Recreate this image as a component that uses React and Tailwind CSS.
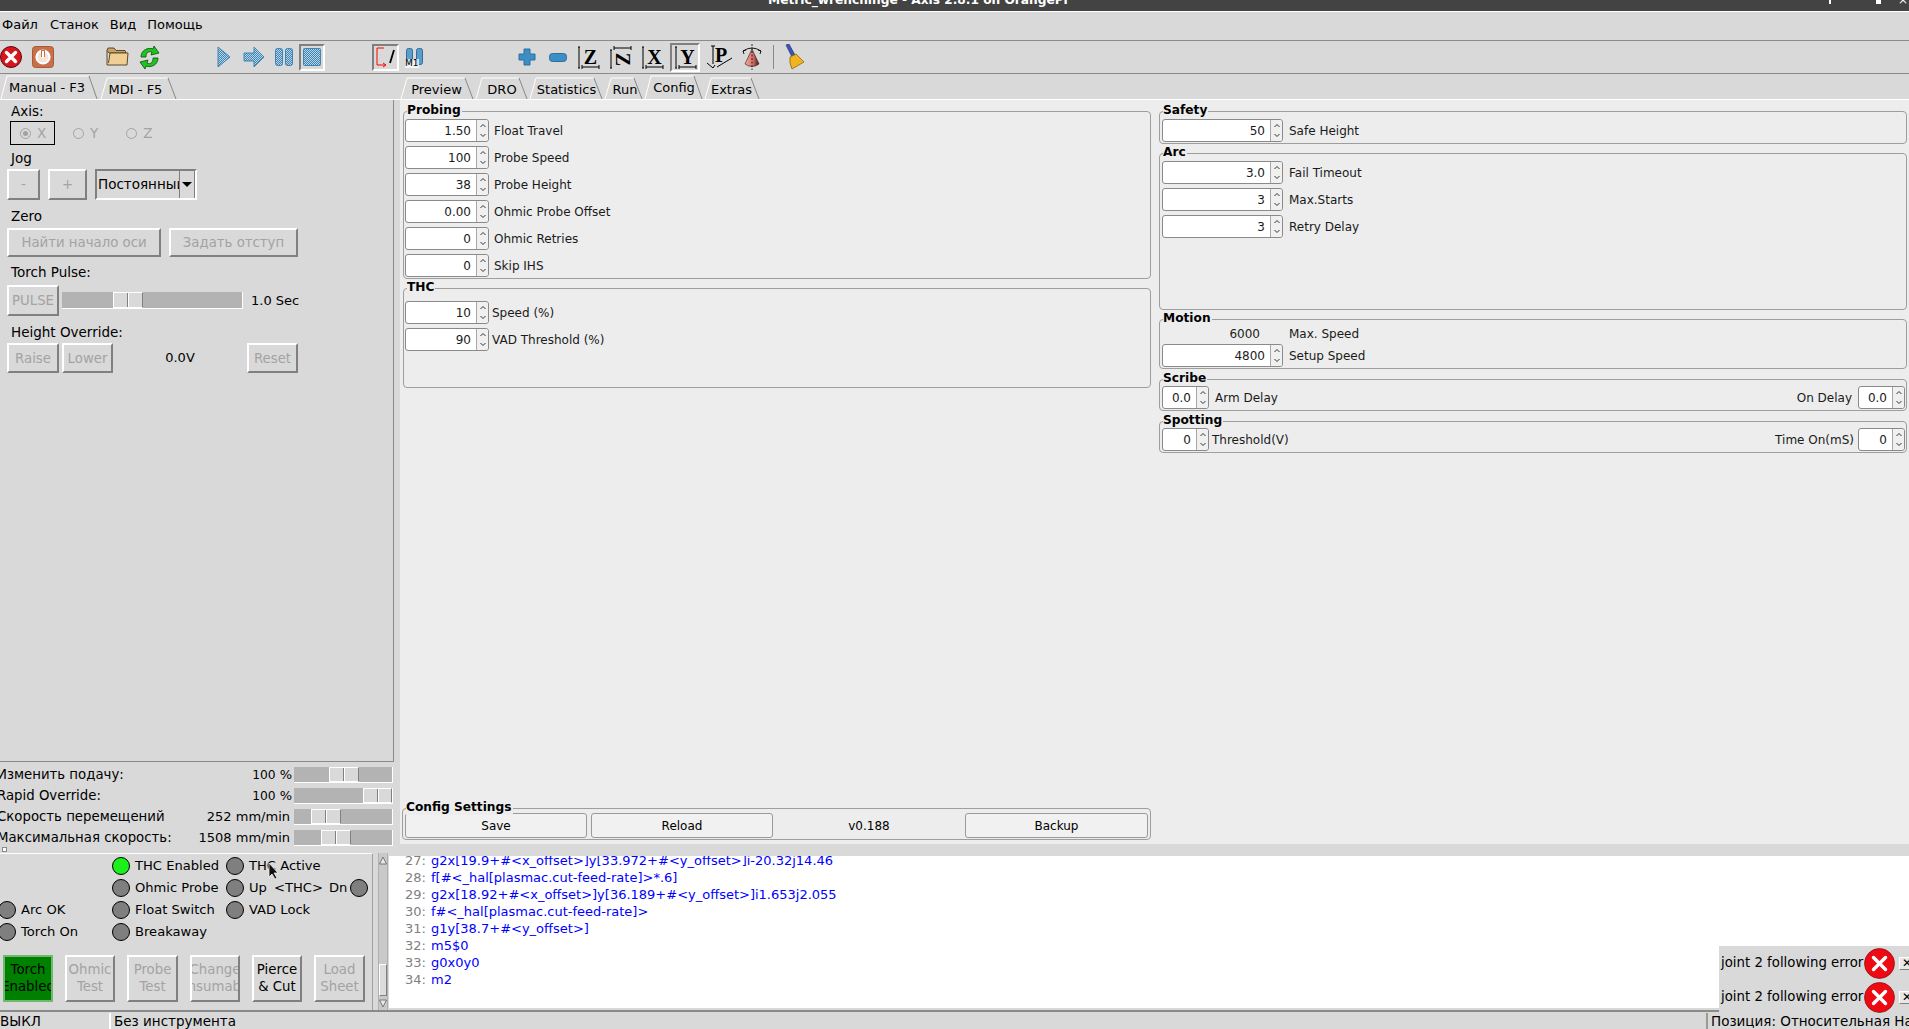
import React from "react";

const ui = "font-['DejaVu_Sans',sans-serif]";

function Hatch({ id }) {
  return (
    <defs>
      <pattern id={id} width="2" height="2" patternUnits="userSpaceOnUse">
        <rect width="2" height="2" fill="#b8d4e6" />
        <rect width="1" height="1" fill="#3f85b2" />
        <rect x="1" y="1" width="1" height="1" fill="#3f85b2" />
      </pattern>
    </defs>
  );
}

const IconStop = () => (
  <svg width="22" height="22" viewBox="0 0 22 22" className="shrink-0">
    <circle cx="11" cy="11" r="10.5" fill="#d8141c" stroke="#5a0a0e" />
    <path d="M6.5 6.5 15.5 15.5M15.5 6.5 6.5 15.5" stroke="#fff" strokeWidth="3.4" strokeLinecap="round" />
  </svg>
);
const IconPower = () => (
  <svg width="22" height="22" viewBox="0 0 22 22" className="ml-[10px] shrink-0">
    <rect x="0.5" y="0.5" width="21" height="21" rx="3" fill="#c8704a" stroke="#a85a38" />
    <circle cx="11" cy="11" r="6.5" fill="#f2e4d8" stroke="#fff" strokeWidth="2.2" />
    <path d="M11 4v7" stroke="#c8704a" strokeWidth="4" />
    <path d="M11 5v7" stroke="#fff" strokeWidth="2" />
  </svg>
);
const IconFolder = () => (
  <svg width="23" height="20" viewBox="0 0 23 20" className="ml-[52px] shrink-0">
    <path d="M1 3.5 2 1h6l2 2.5h9l1 2.5H3z" fill="#c9a368" stroke="#5a4a2a" />
    <path d="M1 3.5V18h20l1-12H4L2.5 16" fill="#f1cf94" stroke="#5a4a2a" />
  </svg>
);
const IconReload = () => (
  <svg width="21" height="23" viewBox="0 0 21 23" className="ml-[10px] shrink-0">
    <path d="M2 11C2 4 9 1 14 3l1-3 5 7-8 2 1-3C9 5 7 7 7 11z" fill="#1fc41f" stroke="#0b4d0b" strokeWidth="0.8" />
    <path d="M19 12c0 7-7 10-12 8l-1 3-5-7 8-2-1 3c4 2 6-1 6-5z" fill="#1fc41f" stroke="#0b4d0b" strokeWidth="0.8" />
  </svg>
);
const IconPlay = () => (
  <svg width="14" height="22" viewBox="0 0 14 22" className="ml-[57px] shrink-0">
    <Hatch id="h1" />
    <path d="M1 1 13 11 1 21z" fill="url(#h1)" stroke="#3d86b5" />
  </svg>
);
const IconStep = () => (
  <svg width="22" height="22" viewBox="0 0 22 22" className="ml-[12px] shrink-0">
    <Hatch id="h2" />
    <path d="M1 7h10V1l10 10-10 10v-6H1z" fill="url(#h2)" stroke="#3d86b5" />
  </svg>
);
const IconPause = () => (
  <svg width="18" height="18" viewBox="0 0 18 18" className="ml-[10px] shrink-0">
    <Hatch id="h3" />
    <rect x="0.5" y="0.5" width="7" height="17" rx="2" fill="url(#h3)" stroke="#3d86b5" />
    <rect x="10.5" y="0.5" width="7" height="17" rx="2" fill="url(#h3)" stroke="#3d86b5" />
  </svg>
);
const IconStopBtn = () => (
  <div className="ml-[6px] flex h-[27px] w-[26px] shrink-0 items-center justify-center border-2 border-t-[#808080] border-l-[#808080] border-r-white border-b-white">
    <svg width="18" height="18" viewBox="0 0 18 18">
      <Hatch id="h4" />
      <rect x="0.5" y="0.5" width="17" height="17" rx="1" fill="url(#h4)" stroke="#3d86b5" />
    </svg>
  </div>
);
const IconToggle = () => (
  <div className="ml-[47px] flex h-[27px] w-[27px] shrink-0 items-center justify-center border-2 border-t-[#808080] border-l-[#808080] border-r-white border-b-white">
    <svg width="21" height="21" viewBox="0 0 21 21">
      <path d="M9 1H2v17h8M8 16l3 2-3 2" fill="none" stroke="#f00" strokeWidth="1" />
      <path d="M19 3 15 16" stroke="#000" strokeWidth="1.8" />
    </svg>
  </div>
);
const IconM1 = () => (
  <div className="relative ml-[6px] h-[18px] w-[19px] shrink-0">
    <svg width="19" height="18" viewBox="0 0 19 18">
      <rect x="1.5" y="0.5" width="6" height="16" rx="2" fill="#5a9dc9" stroke="#2f6f9a" />
      <rect x="11.5" y="0.5" width="6" height="16" rx="2" fill="#5a9dc9" stroke="#2f6f9a" />
    </svg>
    <span className="absolute -bottom-[2px] left-0 bg-white/70 text-[9px] leading-[9px] text-black">M1</span>
  </div>
);
const IconPlus = () => (
  <svg width="18" height="18" viewBox="0 0 18 18" className="ml-[94px] shrink-0">
    <path d="M6 1h6v5h5v6h-5v5H6v-5H1V6h5z" fill="#3d8ec4" stroke="#2a6f9e" strokeLinejoin="round" />
  </svg>
);
const IconMinus = () => (
  <svg width="18" height="9" viewBox="0 0 18 9" className="ml-[13px] shrink-0">
    <rect x="0.5" y="0.5" width="17" height="8" rx="3" fill="#3d8ec4" stroke="#2a6f9e" />
  </svg>
);
const Axis = ({ l, cls, rot }) => (
  <svg width="24" height="24" viewBox="0 0 24 24" className={"shrink-0 " + cls}>
    <path d={rot ? "M2 5h2M3 5v18M2 23h2M6 3h17M6 1v4M23 1v4" : "M2 2h2M3 2v21M2 23h2M6 22h17M6 20v4M23 20v4"} stroke="#000" strokeWidth="1" fill="none" />
    <text x="14.5" y={rot ? "21" : "19"} textAnchor="middle" fontSize="20" fontWeight="bold" fontFamily="'Liberation Serif',serif" transform={rot ? "rotate(90 14.5 14.5)" : undefined}>{l}</text>
  </svg>
);
const IconY = () => (
  <div className="ml-[6px] flex h-[29px] w-[30px] shrink-0 items-center justify-center border-2 border-t-[#808080] border-l-[#808080] border-r-white border-b-white">
    <Axis l="Y" cls="" />
  </div>
);
const IconP = () => (
  <svg width="28" height="26" viewBox="0 0 28 26" className="ml-[5px] shrink-0">
    <path d="M8 2v18M6 2h4M2 19l6 5 2-3M12 23 27 14" stroke="#000" strokeWidth="1" fill="none" />
    <text x="16" y="18" textAnchor="middle" fontSize="20" fontWeight="bold" fontFamily="'Liberation Serif',serif">P</text>
  </svg>
);
const IconCone = () => (
  <svg width="22" height="26" viewBox="0 0 22 26" className="ml-[8px] shrink-0">
    <defs>
      <linearGradient id="cg" x1="0" x2="1" y1="0" y2="0">
        <stop offset="0" stopColor="#f4a9a0" />
        <stop offset="0.55" stopColor="#d8756a" />
        <stop offset="1" stopColor="#3a1a16" />
      </linearGradient>
    </defs>
    <path d="M11 5 4 20q7 5 14 0z" fill="url(#cg)" stroke="#301a16" strokeWidth="0.6" />
    <path d="M2 7q9-6 18 0M2 7l3-1M2 7l1 3M20 7l-3-1M20 7l-1 3" stroke="#000" strokeWidth="0.9" fill="none" />
    <path d="M11 0v26" stroke="#000" strokeWidth="0.8" strokeDasharray="2 1.5" />
  </svg>
);
const IconBrush = () => (
  <svg width="20" height="26" viewBox="0 0 20 26" className="ml-[11px] shrink-0">
    <path d="M1 1 4 0l6 11-3 2z" fill="#3a55b8" stroke="#1a2a66" strokeWidth="0.6" />
    <path d="M5 13 11 10l8 8-12 7q-3-6-2-12z" fill="#f0b51e" stroke="#7a5a08" strokeWidth="0.7" />
  </svg>
);

function Raised({ cls = "", disabled, children }) {
  return (
    <div className={"flex shrink-0 items-center justify-center border-2 border-t-white border-l-white border-r-[#808080] border-b-[#808080] text-[13.3px] leading-[17px] " + (disabled ? "text-[#a3a3a3] " : "text-black ") + cls}>
      {children}
    </div>
  );
}

function Handle({ cls = "" }) {
  return (
    <div className={"flex h-full w-[30px] border-l border-t border-r border-b border-l-white border-t-white border-r-[#808080] border-b-white bg-[#d9d9d9] " + cls}>
      <div className="h-full w-[14px] border-r border-r-[#808080]" />
      <div className="h-full flex-1 border-l border-l-white" />
    </div>
  );
}

function Track({ cls = "", hcls = "" }) {
  return (
    <div className={"flex h-[16px] border-b border-r border-white bg-[#b3b3b3] " + cls}>
      <Handle cls={hcls} />
    </div>
  );
}

function Tab({ w, cls = "", sel, children }) {
  const h = sel ? 23 : 21;
  return (
    <div className={"relative flex h-[26px] shrink-0 items-end justify-center " + cls}>
      <svg width={w} height="26" viewBox={`0 0 ${w} 26`} className="absolute left-0 top-0">
        <path d={`M1 25 7 ${25 - h}H${w - 10}`} fill="none" stroke="#fff" strokeWidth="1" />
        <path d={`M${w - 10} ${25 - h}L${w - 2} 25`} fill="none" stroke="#888" strokeWidth="1" />
      </svg>
      <span className={"relative text-[13px] leading-[18px] " + (sel ? "mb-[3px]" : "mb-[1px]")}>{children}</span>
    </div>
  );
}

function Spin({ v, wide = "w-[84px]" }) {
  return (
    <div className={"flex h-[23px] shrink-0 rounded-[3px] border border-[#8a8a8a] bg-white " + wide}>
      <div className="flex-1 pr-[5px] text-right text-[12px] leading-[22px] text-[#1a1a1a]">{v}</div>
      <div className="flex w-[12px] flex-col items-center justify-between rounded-r-[3px] border-l border-[#a8a8a8] bg-[#f0f0f0] py-px">
        <svg width="8" height="9" viewBox="0 0 8 9" className="shrink-0"><path d="M1.5 6 4 3.5 6.5 6" fill="none" stroke="#333" strokeWidth="1" /></svg>
        <svg width="8" height="9" viewBox="0 0 8 9" className="shrink-0"><path d="M1.5 3 4 5.5 6.5 3" fill="none" stroke="#333" strokeWidth="1" /></svg>
      </div>
    </div>
  );
}

function Row({ v, l, lcls = "ml-[5px]" }) {
  return (
    <div className="flex h-[23px] items-center">
      <Spin v={v} />
      <span className={"text-[12px] text-[#1a1a1a] " + lcls}>{l}</span>
    </div>
  );
}

function RowR({ v, l }) {
  return (
    <div className="flex h-[23px] items-center">
      <Spin v={v} wide="w-[121px]" />
      <span className="ml-[6px] text-[12px] text-[#1a1a1a]">{l}</span>
    </div>
  );
}

function Frame({ title, cls = "", children }) {
  return (
    <div className={"relative shrink-0 rounded-[4px] border border-[#9e9e9e] " + cls}>
      <span className="absolute -top-[9px] left-[3px] bg-[#ededed] pr-[1px] text-[12.2px] font-bold leading-[15px] text-black">{title}</span>
      {children}
    </div>
  );
}

function Led({ on }) {
  return <div className={"h-[18px] w-[18px] shrink-0 rounded-full border border-black " + (on ? "bg-[#1bf01b]" : "bg-[#7f7f7f]")} />;
}

function LedL({ on, children }) {
  return (
    <div className="flex h-[22px] items-center gap-[5px]">
      <Led on={on} />
      <span className="whitespace-pre text-[13.1px]">{children}</span>
    </div>
  );
}

function OverRow({ l, v, vcls = "", hcls = "" }) {
  return (
    <div className="flex h-[21px] items-center">
      <div className="flex min-w-0 flex-1 items-center overflow-hidden">
        <span className="-ml-[3px] whitespace-nowrap text-[13.3px]">{l}</span>
      </div>
      <span className={"shrink-0 whitespace-pre text-right text-[13px] " + vcls}>{v}</span>
      <Track cls="ml-[2px] w-[99px] shrink-0" hcls={hcls} />
    </div>
  );
}

const code = [
  ["27:", "g2x[19.9+#<x_offset>]y[33.972+#<y_offset>]i-20.32j14.46"],
  ["28:", "f[#<_hal[plasmac.cut-feed-rate]>*.6]"],
  ["29:", "g2x[18.92+#<x_offset>]y[36.189+#<y_offset>]i1.653j2.055"],
  ["30:", "f#<_hal[plasmac.cut-feed-rate]>"],
  ["31:", "g1y[38.7+#<y_offset>]"],
  ["32:", "m5$0"],
  ["33:", "g0x0y0"],
  ["34:", "m2"],
];

function ErrRow() {
  return (
    <div className="flex h-[34px] items-center">
      <span className="ml-[2px] w-[147px] shrink-0 whitespace-nowrap text-[13.3px] text-black">joint 2 following error</span>
      <svg width="31" height="31" viewBox="0 0 31 31" className="-ml-[4px] shrink-0">
        <circle cx="15.5" cy="15.5" r="15" fill="#ee0a12" stroke="#7a1014" strokeWidth="0.7" />
        <path d="M9.5 9.5 21.5 21.5M21.5 9.5 9.5 21.5" stroke="#fff" strokeWidth="3.4" strokeLinecap="round" />
      </svg>
      <div className="ml-[4px] flex h-[13px] w-[16px] shrink-0 items-center justify-center border border-t-white border-l-white border-r-[#808080] border-b-[#808080] bg-[#e8e8e8] text-[12px] leading-[12px] text-black">✕</div>
    </div>
  );
}

const Pct = () => (
  <>
    <span className="text-[12.3px]">100</span>
    <span className="ml-[4px]">%</span>
  </>
);

export default function App() {
  return (
    <div className={"relative flex h-[1029px] w-[1909px] flex-col overflow-hidden bg-[#d9d9d9] text-black " + ui}>
      {/* title bar */}
      <div className="relative h-[11px] shrink-0 overflow-hidden bg-[#434343] text-white">
        <span className="absolute -top-[7px] left-[768px] whitespace-nowrap text-[12.2px] font-bold leading-[14px]">Metric_wrenchinge - Axis 2.8.1 on OrangePi</span>
        <div className="absolute left-[1829px] top-0 h-[4px] w-[2px] bg-white" />
        <div className="absolute left-[1876px] top-0 h-[4px] w-[5px] bg-white" />
        <span className="absolute -top-[7px] left-[1898px] text-[12px] leading-[14px]">×</span>
      </div>
      <div className="h-px shrink-0 bg-white" />
      {/* menu */}
      <div className="flex h-[29px] shrink-0 items-center border-b border-[#8a8a8a] pb-[2px] text-[13px]">
        <span className="ml-[2px]">Файл</span>
        <span className="ml-[12px]">Станок</span>
        <span className="ml-[11px]">Вид</span>
        <span className="ml-[11px]">Помощь</span>
      </div>
      {/* toolbar */}
      <div className="flex h-[33px] shrink-0 items-center border-b border-[#8a8a8a]">
        <IconStop />
        <IconPower />
        <IconFolder />
        <IconReload />
        <IconPlay />
        <IconStep />
        <IconPause />
        <IconStopBtn />
        <IconToggle />
        <IconM1 />
        <IconPlus />
        <IconMinus />
        <Axis l="Z" cls="ml-[9px]" />
        <Axis l="Z" rot cls="ml-[8px]" />
        <Axis l="X" cls="ml-[8px]" />
        <IconY />
        <IconP />
        <IconCone />
        <div className="ml-[10px] h-[24px] w-px shrink-0 bg-[#8a8a8a]" />
        <IconBrush />
      </div>
      {/* main */}
      <div className="flex min-h-0 flex-1">
        {/* left column */}
        <div className="flex w-[400px] shrink-0 flex-col">
          <div className="flex h-[26px] shrink-0 border-b border-white pr-[6px]">
            <Tab w={99} cls="w-[99px] pr-[5px]" sel>Manual - F3</Tab>
            <Tab w={78} cls="ml-px w-[78px] pr-[7px]">MDI - F5</Tab>
          </div>
          <div className="flex h-[662px] w-[394px] shrink-0 flex-col border-r border-b border-[#8a8a8a]">
            <div className="ml-[11px] mt-[1px] text-[13.5px] leading-[20px]">Axis:</div>
            <div className="ml-[10px] mt-[0px] flex h-[24px] items-center text-[13.5px] text-[#a3a3a3]">
              <div className="flex h-[24px] w-[45px] items-center border border-black pl-[9px]">
                <span className="flex h-[11px] w-[11px] items-center justify-center rounded-full border border-[#a3a3a3]"><span className="h-[5px] w-[5px] rounded-full bg-[#a3a3a3]" /></span>
                <span className="ml-[6px]">X</span>
              </div>
              <span className="ml-[18px] h-[11px] w-[11px] rounded-full border border-[#a3a3a3]" />
              <span className="ml-[6px]">Y</span>
              <span className="ml-[28px] h-[11px] w-[11px] rounded-full border border-[#a3a3a3]" />
              <span className="ml-[6px]">Z</span>
            </div>
            <div className="ml-[11px] mt-[3px] text-[13.5px] leading-[20px]">Jog</div>
            <div className="ml-[7px] mt-[1px] flex h-[31px] items-center">
              <Raised disabled cls="h-[31px] w-[33px]">-</Raised>
              <Raised disabled cls="ml-[8px] h-[31px] w-[39px]">+</Raised>
              <div className="ml-[8px] flex h-[31px] w-[102px] items-center overflow-hidden border-2 border-t-[#808080] border-l-[#808080] border-r-white border-b-white">
                <span className="ml-[1px] w-[81px] overflow-hidden whitespace-nowrap text-[13.5px]">Постоянный</span>
                <div className="flex h-full flex-1 items-center justify-center border-l border-r border-[#808080]">
                  <div className="h-0 w-0 border-x-[5px] border-t-[5px] border-x-transparent border-t-black" />
                </div>
              </div>
            </div>
            <div className="ml-[11px] mt-[6px] text-[13.5px] leading-[20px]">Zero</div>
            <div className="ml-[7px] mt-[2px] flex">
              <Raised disabled cls="h-[29px] w-[154px]">Найти начало оси</Raised>
              <Raised disabled cls="ml-[8px] h-[29px] w-[129px]">Задать отступ</Raised>
            </div>
            <div className="ml-[11px] mt-[5px] text-[13.5px] leading-[20px]">Torch Pulse:</div>
            <div className="ml-[7px] mt-[3px] flex h-[31px] items-center">
              <Raised disabled cls="h-[31px] w-[52px]">PULSE</Raised>
              <Track cls="ml-[3px] h-[17px] w-[181px]" hcls="ml-[51px]" />
              <span className="ml-[8px] text-[13px]">1.0 Sec</span>
            </div>
            <div className="ml-[11px] mt-[6px] text-[13.5px] leading-[20px]">Height Override:</div>
            <div className="ml-[7px] mt-[1px] flex h-[30px] items-center">
              <Raised disabled cls="h-[30px] w-[52px]">Raise</Raised>
              <Raised disabled cls="ml-[3px] h-[30px] w-[51px]">Lower</Raised>
              <span className="w-[134px] text-center text-[13px]">0.0V</span>
              <Raised disabled cls="h-[30px] w-[51px]">Reset</Raised>
            </div>
          </div>
          <div className="flex w-[393px] shrink-0 flex-col pt-[2px]">
            <OverRow l="Изменить подачу:" v={<Pct />} hcls="ml-[35px]" />
            <OverRow l="Rapid Override:" v={<Pct />} hcls="ml-[69px]" />
            <OverRow l="Скорость перемещений" v="252 mm/min" vcls="mr-[2px]" hcls="ml-[17px]" />
            <OverRow l="Максимальная скорость:" v="1508 mm/min" vcls="mr-[2px]" hcls="ml-[27px]" />
          </div>
        </div>
        {/* config */}
        <div className="flex min-w-0 flex-1 flex-col">
          <div className="flex h-[26px] shrink-0 border-b border-white">
            <Tab w={75} cls="w-[75px] pr-[2px]">Preview</Tab>
            <Tab w={54} cls="w-[54px]">DRO</Tab>
            <Tab w={75} cls="w-[75px]">Statistics</Tab>
            <Tab w={40} cls="w-[40px] pl-[2px]">Run</Tab>
            <Tab w={60} cls="w-[60px]" sel>Config</Tab>
            <Tab w={57} cls="w-[57px] pr-[2px]">Extras</Tab>
          </div>
          <div className="flex h-[744px] shrink-0 bg-[#ededed] pl-[3px]">
            <div className="flex w-[748px] shrink-0 flex-col pt-[11px]">
              <Frame title="Probing" cls="h-[168px] pl-px pt-[7px]">
                <div className="flex flex-col gap-[4px]">
                  <Row v="1.50" l="Float Travel" />
                  <Row v="100" l="Probe Speed" />
                  <Row v="38" l="Probe Height" />
                  <Row v="0.00" l="Ohmic Probe Offset" />
                  <Row v="0" l="Ohmic Retries" />
                  <Row v="0" l="Skip IHS" />
                </div>
              </Frame>
              <Frame title="THC" cls="mt-[9px] h-[100px] pl-px pt-[12px]">
                <div className="flex flex-col gap-[4px]">
                  <Row v="10" l="Speed (%)" lcls="ml-[3px]" />
                  <Row v="90" l="VAD Threshold (%)" lcls="ml-[3px]" />
                </div>
              </Frame>
              <Frame title="Config Settings" cls="mt-auto mb-[4px] -ml-px h-[32px] pl-[2px] pt-[4px]">
                <div className="flex items-center text-[12px]">
                  <div className="flex h-[25px] w-[182px] items-center justify-center rounded-[3px] border border-[#9a9a9a] bg-[#f1f1f1]">Save</div>
                  <div className="ml-[4px] flex h-[25px] w-[182px] items-center justify-center rounded-[3px] border border-[#9a9a9a] bg-[#f1f1f1]">Reload</div>
                  <div className="w-[192px] text-center">v0.188</div>
                  <div className="flex h-[25px] w-[183px] items-center justify-center rounded-[3px] border border-[#9a9a9a] bg-[#f1f1f1]">Backup</div>
                </div>
              </Frame>
            </div>
            <div className="ml-[8px] flex w-[748px] shrink-0 flex-col pt-[11px]">
              <Frame title="Safety" cls="h-[33px] pl-[2px] pt-[7px]">
                <RowR v="50" l="Safe Height" />
              </Frame>
              <Frame title="Arc" cls="mt-[9px] h-[157px] pl-[2px] pt-[7px]">
                <div className="flex flex-col gap-[4px]">
                  <RowR v="3.0" l="Fail Timeout" />
                  <RowR v="3" l="Max.Starts" />
                  <RowR v="3" l="Retry Delay" />
                </div>
              </Frame>
              <Frame title="Motion" cls="mt-[9px] h-[50px] pl-[2px]">
                <div className="flex h-[24px] items-center pt-[3px] text-[12px] text-[#1a1a1a]">
                  <span className="w-[98px] text-right">6000</span>
                  <span className="ml-[29px]">Max. Speed</span>
                </div>
                <RowR v="4800" l="Setup Speed" />
              </Frame>
              <Frame title="Scribe" cls="mt-[10px] flex h-[32px] items-start justify-between pl-[2px] pr-px pt-[6px]">
                <div className="flex h-[23px] items-center">
                  <Spin v="0.0" wide="w-[47px]" />
                  <span className="ml-[6px] text-[12px] text-[#1a1a1a]">Arm Delay</span>
                </div>
                <div className="flex h-[23px] items-center">
                  <span className="mr-[6px] text-[12px] text-[#1a1a1a]">On Delay</span>
                  <Spin v="0.0" wide="w-[47px]" />
                </div>
              </Frame>
              <Frame title="Spotting" cls="mt-[10px] flex h-[32px] items-start justify-between pl-[2px] pr-px pt-[6px]">
                <div className="flex h-[23px] items-center">
                  <Spin v="0" wide="w-[47px]" />
                  <span className="ml-[3px] text-[12px] text-[#1a1a1a]">Threshold(V)</span>
                </div>
                <div className="flex h-[23px] items-center">
                  <span className="mr-[4px] text-[12px] text-[#1a1a1a]">Time On(mS)</span>
                  <Spin v="0" wide="w-[47px]" />
                </div>
              </Frame>
            </div>
          </div>
        </div>
      </div>
      {/* sash */}
      <div className="flex h-[8px] shrink-0 items-end pl-[2px]">
        <div className="mb-[1px] h-[5px] w-[5px] border border-[#8a8a8a] bg-white" />
      </div>
      {/* bottom */}
      <div className="flex h-[157px] shrink-0">
        <div className="flex w-[373px] shrink-0 flex-col overflow-hidden border-r border-t border-r-[#a0a0a0] border-t-white pt-[1px]">
          <div className="-ml-[2px] grid grid-cols-[114px_114px_1fr]">
            <div />
            <div className="col-start-2"><LedL on>THC Enabled</LedL></div>
            <div><LedL>THC Active</LedL></div>
            <div />
            <div><LedL>Ohmic Probe</LedL></div>
            <div className="flex h-[22px] items-center">
              <LedL>
                <span className="inline-block w-[25px]">Up</span>
                <span className="inline-block w-[55px]">{"<THC>"}</span>
                <span className="inline-block w-[21px]">Dn</span>
              </LedL>
              <Led />
            </div>
            <div><LedL>Arc OK</LedL></div>
            <div><LedL>Float Switch</LedL></div>
            <div><LedL>VAD Lock</LedL></div>
            <div><LedL>Torch On</LedL></div>
            <div><LedL>Breakaway</LedL></div>
          </div>
          <div className="ml-[3px] mt-[12px] flex justify-between pb-px pr-[7px]">
            <Raised cls="h-[47px] w-[50px] overflow-hidden !border-[#6fb96f] bg-[#008000] pb-px text-center">Torch<br />Enabled</Raised>
            <Raised disabled cls="h-[47px] w-[50px] overflow-hidden pb-px text-center">Ohmic<br />Test</Raised>
            <Raised disabled cls="h-[47px] w-[51px] overflow-hidden pb-px text-center">Probe<br />Test</Raised>
            <Raised disabled cls="h-[47px] w-[50px] overflow-hidden whitespace-nowrap pb-px text-center">Change<br />Consumables</Raised>
            <Raised cls="h-[47px] w-[50px] pb-px text-center">Pierce<br />&amp; Cut</Raised>
            <Raised disabled cls="h-[47px] w-[51px] pb-px text-center">Load<br />Sheet</Raised>
          </div>
        </div>
        <div className="ml-[5px] flex w-[10px] shrink-0 flex-col border-l border-r border-[#b0b0b0] bg-[#c9c9c9] pt-[3px]">
          <svg width="8" height="9" viewBox="0 0 8 9" className="shrink-0"><path d="M4 1 7.5 8H.5z" fill="#e8e8e8" stroke="#777" /></svg>
          <div className="mt-auto mb-[3px] h-[32px] border border-t-white border-l-white border-r-[#808080] border-b-[#808080] bg-[#dcdcdc]" />
          <svg width="8" height="9" viewBox="0 0 8 9" className="mb-[2px] shrink-0"><path d="M4 8 7.5 1H.5z" fill="#e8e8e8" stroke="#777" /></svg>
        </div>
        <div className="ml-px mt-[3px] mb-[2px] flex min-w-0 flex-1 flex-col overflow-hidden bg-white">
          <div className="-mt-[4px] flex flex-col text-[13px] leading-[17px]">
            {code.map(([n, c]) => (
              <div key={n} className="flex h-[17px] whitespace-pre">
                <span className="w-[37px] shrink-0 text-right text-[#808080]">{n}</span>
                <span className="ml-[5px] text-[#0000ff]">{c}</span>
              </div>
            ))}
          </div>
        </div>
      </div>
      {/* status */}
      <div className="flex h-[19px] shrink-0 items-center overflow-hidden border-t-2 border-[#8a8a8a] pt-px text-[13.5px] leading-[16px]">
        <div className="w-[111px] shrink-0 border-r-2 border-white">ВЫКЛ</div>
        <div className="w-[1597px] shrink-0 border-r-2 border-[#9a9a9a] pl-[3px]">Без инструмента</div>
        <div className="ml-[3px] whitespace-nowrap">Позиция: Относительная Нашена</div>
      </div>
      {/* floating error notifications */}
      <div className="absolute left-[1719px] top-[946px] h-[68px] w-[190px] overflow-hidden bg-[#d9d9d9]">
        <ErrRow />
        <ErrRow />
      </div>
      {/* mouse cursor */}
      <svg width="12" height="18" viewBox="0 0 12 18" className="absolute left-[268px] top-[862px]">
        <path d="M1 1v14l3-3 3 5 2-1-3-5h4z" fill="#111" stroke="#fff" strokeWidth="0.7" />
      </svg>
    </div>
  );
}
